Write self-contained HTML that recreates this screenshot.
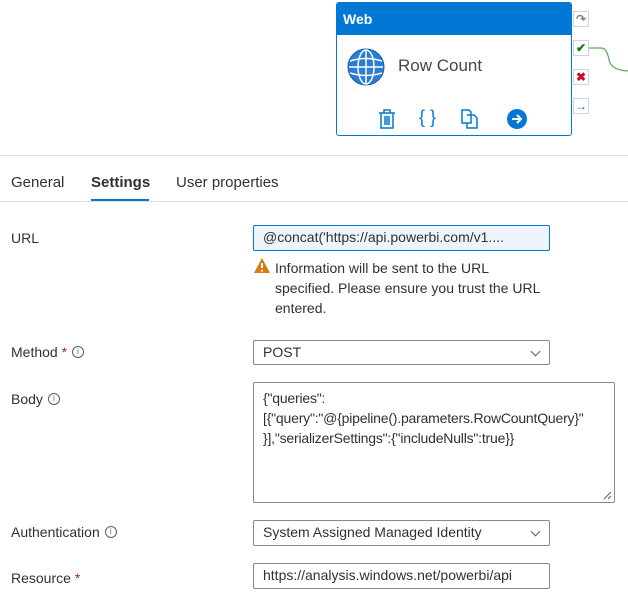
<!DOCTYPE html>
<html><head><style>
body{margin:0;width:628px;height:601px;background:#fff;font-family:"Liberation Sans",sans-serif;color:#323130;position:relative;overflow:hidden;font-size:14px}
.a{position:absolute}
.box{position:absolute;border:1px solid #8a8886;border-radius:2px;box-sizing:border-box;padding:0 9px;line-height:23px;font-size:14px;white-space:nowrap;overflow:hidden}
.lbl{position:absolute;left:11px;font-size:14px}
.req{color:#a4262c}
.info{display:inline-block;width:10px;height:10px;border:1px solid #605e5c;border-radius:50%;font-size:8px;line-height:10px;text-align:center;vertical-align:3px;margin-left:5px;color:#605e5c}
.chev{position:absolute;right:10px;top:7px;width:6px;height:6px;border-right:1px solid #605e5c;border-bottom:1px solid #605e5c;transform:rotate(45deg)}
.side{position:absolute;left:573px;width:16px;height:16px;background:#fff;border:1px solid #c8d8ea;box-sizing:border-box;font-size:12px;line-height:14px;text-align:center;font-weight:bold}
</style></head><body>
<div class="a" style="left:336px;top:2px;width:236px;height:134px;border:1px solid #0078d4;border-radius:3px;box-sizing:border-box;overflow:hidden">
 <div style="background:#0078d4;height:32px;color:#fff;font-weight:bold;font-size:14px;line-height:32px;padding-left:6px">Web</div>
 <svg class="a" style="left:10px;top:45px" width="38" height="38" viewBox="0 0 38 38"><circle cx="19" cy="19" r="18" fill="#2b7cd3" stroke="#1a5fb4"/><g fill="none" stroke="#fff" stroke-width="1.5"><ellipse cx="19" cy="19" rx="8" ry="17"/><line x1="19" y1="2" x2="19" y2="36"/><path d="M3 13Q19 8 35 13M2 19H36M3 25Q19 30 35 25"/></g></svg>
 <div class="a" style="left:61px;top:53px;font-size:17px;color:#484644">Row Count</div>
 <svg class="a" style="left:41px;top:106px" width="18" height="20" viewBox="0 0 18 20"><g fill="none" stroke="#0078d4" stroke-width="1.5"><path d="M1 4H17M6 4V1H12V4M3 4V19H15V4M7 7V16M9 7V16M11 7V16"/></g></svg>
 <div class="a" style="left:82px;top:104px;color:#0078d4;font-size:18px">{ }</div>
 <svg class="a" style="left:124px;top:106px" width="18" height="20" viewBox="0 0 18 20"><g fill="none" stroke="#0078d4" stroke-width="1.5"><path d="M1 1H8L10 3V14H1ZM6 6H13L16 9V19H6V14"/></g></svg>
 <svg class="a" style="left:170px;top:106px" width="20" height="20" viewBox="0 0 20 20"><circle cx="10" cy="10" r="10" fill="#0078d4"/><path d="M5 10H14M10 6L14 10L10 14" stroke="#fff" stroke-width="2" fill="none"/></svg>
</div>
<div class="side" style="top:11px;color:#888">↷</div>
<div class="side" style="top:40px;color:#107c10">✔</div>
<div class="side" style="top:69px;color:#c50f1f">✖</div>
<div class="side" style="top:98px;color:#0078d4">→</div>
<svg class="a" style="left:589px;top:40px" width="39" height="40"><path d="M0 8H12Q18 8 20 20Q22 30 39 31" fill="none" stroke="#5ea85e" stroke-width="1.2"/></svg>
<div class="a" style="left:0;top:155px;width:628px;height:1px;background:#e1dfdd"></div>
<div class="a" style="left:11px;top:174px;font-size:15px;color:#323130">General</div>
<div class="a" style="left:91px;top:174px;font-size:15px;font-weight:bold;color:#323130">Settings</div>
<div class="a" style="left:91px;top:199px;width:58px;height:2px;background:#0078d4"></div>
<div class="a" style="left:176px;top:174px;font-size:15px;color:#323130">User properties</div>
<div class="a" style="left:0;top:201px;width:628px;height:1px;background:#e1dfdd"></div>
<div class="lbl" style="top:230px">URL</div>
<div class="box" style="left:253px;top:225px;width:297px;height:26px;background:#eef4fb;border-color:#0078d4">@concat('https://api.powerbi.com/v1....</div>
<svg class="a" style="left:253px;top:257px" width="18" height="17" viewBox="0 0 18 17"><path d="M9 1L17 16H1Z" fill="#d87a16"/><path d="M9 6V11M9 13V14.5" stroke="#fff" stroke-width="2"/></svg>
<div class="a" style="left:275px;top:258px;width:270px;line-height:20px;font-size:14px">Information will be sent to the URL specified. Please ensure you trust the URL entered.</div>
<div class="lbl" style="top:344px">Method <span class="req">*</span><span class="info">i</span></div>
<div class="box" style="left:253px;top:340px;width:297px;height:25px">POST<div class="chev"></div></div>
<div class="lbl" style="top:391px">Body<span class="info">i</span></div>
<div class="box" style="left:253px;top:382px;width:362px;height:121px;white-space:normal;line-height:20px;padding-top:5px;font-size:14px;letter-spacing:-0.2px">{"queries":<br>[{"query":"@{pipeline().parameters.RowCountQuery}"<br>}],"serializerSettings":{"includeNulls":true}}
<svg class="a" style="right:2px;bottom:2px" width="10" height="10"><path d="M2 9L9 2M6 9L9 6" stroke="#605e5c"/></svg></div>
<div class="lbl" style="top:524px">Authentication<span class="info">i</span></div>
<div class="box" style="left:253px;top:520px;width:297px;height:26px">System Assigned Managed Identity<div class="chev"></div></div>
<div class="lbl" style="top:570px">Resource <span class="req">*</span></div>
<div class="box" style="left:253px;top:563px;width:297px;height:26px">https://analysis.windows.net/powerbi/api</div>
</body></html>
